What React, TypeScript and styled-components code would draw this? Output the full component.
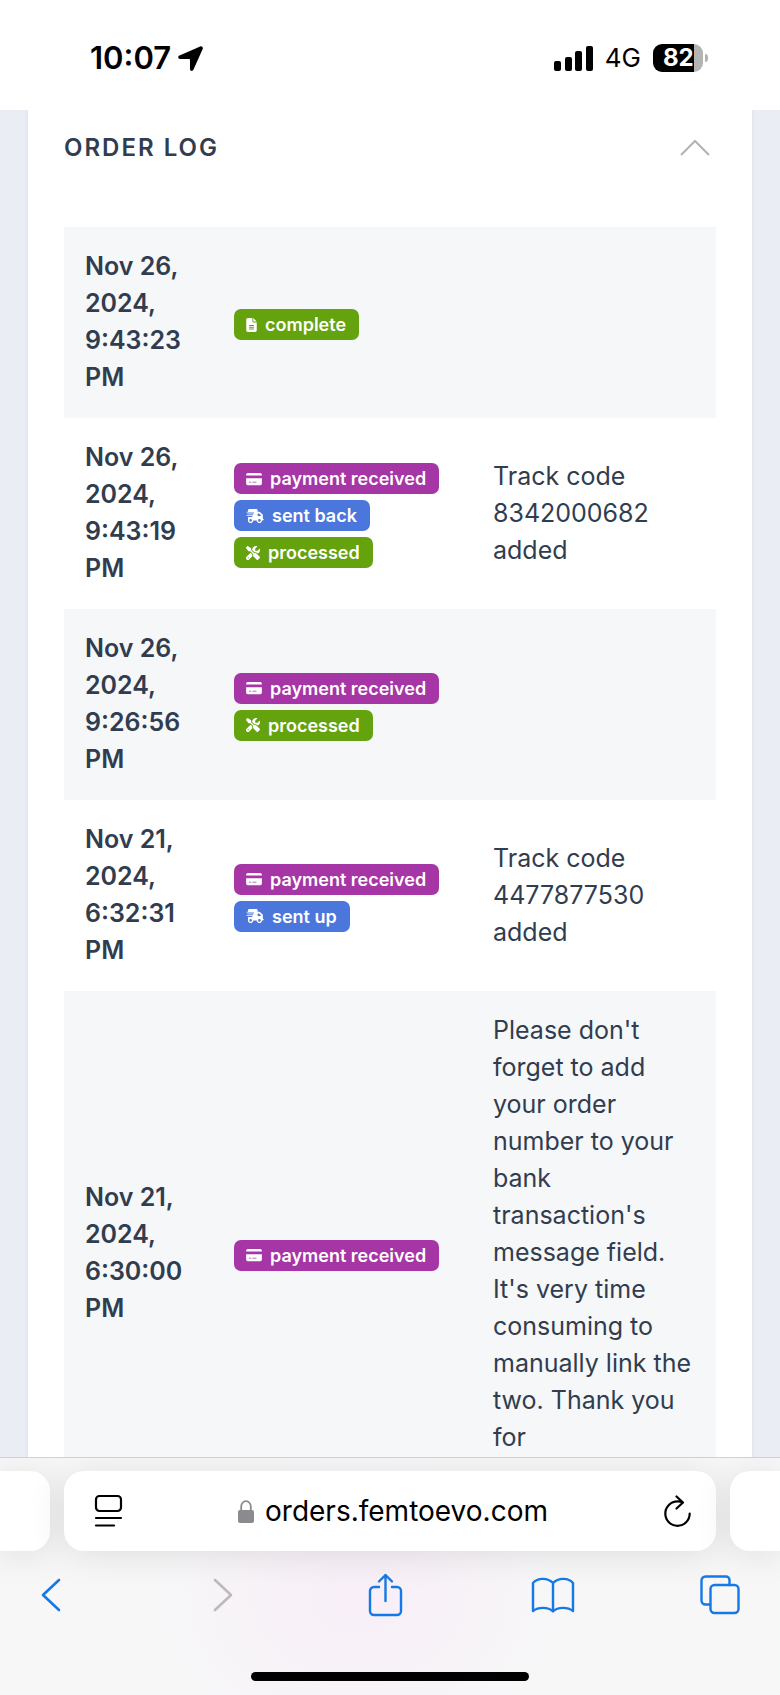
import React from 'react';
import styled, { createGlobalStyle } from 'styled-components';
import { FaFileLines, FaCreditCard, FaTruckFast, FaScrewdriverWrench } from 'react-icons/fa6';

const GlobalStyle = createGlobalStyle`
  *, *::before, *::after { box-sizing: border-box; }
  body { margin: 0; font-family: Inter, 'Liberation Sans', sans-serif; background: #fff; }
  button { border: 0; padding: 0; background: none; font: inherit; color: inherit; cursor: pointer; }
  svg { display: block; flex: none; }
`;

const Screen = styled.div`
  display: flex;
  flex-direction: column;
  height: 100vh;
  overflow: hidden;
`;

const StatusBar = styled.header`
  display: flex;
  justify-content: space-between;
  align-items: center;
  flex: none;
  height: 110px;
  padding: 6px 72px 0 90px;
  color: #000;
`;

const StatusGroup = styled.div<{ $gap: number }>`
  display: flex;
  align-items: center;
  gap: ${(p) => p.$gap}px;
`;

const Clock = styled.time`
  font-size: 31px;
  font-weight: 600;
  line-height: 36px;
`;

const Network = styled.span`
  font-size: 26px;
  line-height: 32px;
`;

const Battery = styled.div`
  display: flex;
  align-items: center;
  gap: 2px;
  &::after {
    content: '';
    width: 3px;
    height: 8px;
    border-radius: 0 4px 4px 0;
    background: #b4b4b4;
  }
`;

const BatteryLevel = styled.span`
  width: 50px;
  height: 28px;
  padding-left: 10px;
  border-radius: 9px;
  background: linear-gradient(to right, #000 82%, #b4b4b4 82%);
  color: #fff;
  font-size: 24px;
  font-weight: 700;
  line-height: 28px;
`;

const Viewport = styled.main`
  flex: 1;
  min-height: 0;
  overflow: hidden;
  padding: 0 28px;
  background: #eaedf3;
`;

const Card = styled.section`
  min-height: 100%;
  padding: 0 36px;
  background: #fff;
  box-shadow: 0 0 3px rgba(90, 110, 150, 0.15);
`;

const CardHeader = styled.div`
  display: flex;
  justify-content: space-between;
  align-items: center;
  height: 117px;
  padding: 0 6px 43px 0;
`;

const Title = styled.h2`
  margin: 0;
  color: #313d4f;
  font-size: 24px;
  font-weight: 600;
  line-height: 37px;
  letter-spacing: 2px;
`;

const LogTable = styled.table`
  width: 100%;
  border-collapse: collapse;
  table-layout: fixed;
  color: #313d4f;
  font-size: 25px;
  line-height: 37px;
`;

const LogRow = styled.tr`
  &:nth-child(odd) { background: #f5f7f9; }
`;

const DateCell = styled.th`
  width: 149px;
  padding: 21px 21px 22px;
  font-weight: 600;
  text-align: left;
`;

const StatusCell = styled.td`
  width: 259px;
  padding: 21px;
`;

const NoteCell = styled.td<{ $long?: boolean }>`
  padding: 21px 21px ${(p) => (p.$long ? 59 : 22)}px;
`;

const BadgeList = styled.ul`
  display: flex;
  flex-direction: column;
  align-items: flex-start;
  gap: 6px;
  margin: 0;
  padding: 4px 0 0;
  list-style: none;
`;

const tones = { green: '#64a30d', purple: '#a635a6', blue: '#4b77dc' };

const Badge = styled.li<{ $tone: keyof typeof tones; $iconWidth: number }>`
  display: flex;
  align-items: center;
  gap: 8px;
  height: 31px;
  padding: 0 13px 0 12px;
  border-radius: 7px;
  background: ${(p) => tones[p.$tone]};
  color: #fff;
  font-size: 18px;
  font-weight: 600;
  line-height: 31px;
  white-space: nowrap;
  svg {
    width: ${(p) => p.$iconWidth}px;
    height: 14px;
  }
`;

const BrowserBar = styled.footer`
  flex: none;
  overflow: hidden;
  border-top: 1px solid #cfd0d4;
  background:
    radial-gradient(ellipse 200px 150px at 46% 60%, #f8eef7, rgba(248, 238, 247, 0)),
    #f7f7f8;
`;

const TabStrip = styled.div`
  display: flex;
  gap: 14px;
  padding-top: 13px;
`;

const tabShadow = '0 4px 36px rgba(0, 0, 0, 0.1)';

const NextTab = styled.button<{ $side: 'left' | 'right' }>`
  width: 50px;
  height: 80px;
  border-radius: ${(p) => (p.$side === 'left' ? '0 20px 20px 0' : '20px 0 0 20px')};
  background: #fff;
  box-shadow: ${tabShadow};
`;

const AddressBar = styled.div`
  display: flex;
  flex: 1;
  justify-content: space-between;
  align-items: center;
  height: 80px;
  padding: 0 25px 0 30px;
  border-radius: 20px;
  background: #fff;
  box-shadow: ${tabShadow};
`;

const Address = styled.label`
  display: flex;
  align-items: center;
  gap: 11px;
`;

const AddressInput = styled.input`
  field-sizing: content;
  padding: 0;
  border: 0;
  outline: 0;
  background: none;
  color: #000;
  font: 400 28px/38px Inter, 'Liberation Sans', sans-serif;
`;

const Toolbar = styled.nav`
  display: flex;
  justify-content: space-between;
  align-items: center;
  height: 88px;
  padding: 0 38px 0 29px;
  color: #1478e6;
`;

const ToolButton = styled.button`
  display: flex;
  justify-content: center;
  width: 44px;
  &:disabled { color: #bcbabf; }
`;

const HomeIndicator = styled.div`
  width: 278px;
  height: 9px;
  margin: 33px auto 14px;
  border-radius: 5px;
  background: #000;
`;

type Kind = 'complete' | 'payment received' | 'sent back' | 'sent up' | 'processed';

const kinds: Record<Kind, { tone: keyof typeof tones; icon: React.ReactNode; width: number }> = {
  complete: { tone: 'green', icon: <FaFileLines />, width: 11 },
  'payment received': { tone: 'purple', icon: <FaCreditCard />, width: 16 },
  'sent back': { tone: 'blue', icon: <FaTruckFast />, width: 18 },
  'sent up': { tone: 'blue', icon: <FaTruckFast />, width: 18 },
  processed: { tone: 'green', icon: <FaScrewdriverWrench />, width: 14 },
};

const entries: { date: string; statuses: Kind[]; note?: string; long?: boolean }[] = [
  { date: 'Nov 26, 2024, 9:43:23 PM', statuses: ['complete'] },
  {
    date: 'Nov 26, 2024, 9:43:19 PM',
    statuses: ['payment received', 'sent back', 'processed'],
    note: 'Track code 8342000682 added',
  },
  { date: 'Nov 26, 2024, 9:26:56 PM', statuses: ['payment received', 'processed'] },
  {
    date: 'Nov 21, 2024, 6:32:31 PM',
    statuses: ['payment received', 'sent up'],
    note: 'Track code 4477877530 added',
  },
  {
    date: 'Nov 21, 2024, 6:30:00 PM',
    statuses: ['payment received'],
    note: "Please don't forget to add your order number to your bank transaction's message field. It's very time consuming to manually link the two. Thank you for",
    long: true,
  },
];

const stroke = {
  fill: 'none',
  stroke: 'currentColor',
  strokeLinecap: 'round' as const,
  strokeLinejoin: 'round' as const,
};

export default function App() {
  return (
    <Screen>
      <GlobalStyle />
      <StatusBar>
        <StatusGroup $gap={7}>
          <Clock>10:07</Clock>
          <svg width="25" height="25" viewBox="0 0 25 25" fill="#000">
            <path d="M22.2.4 1.5 9.6C-.5 10.5 0 13 2 13h9.2c.5 0 .8.3.8.8V23c0 2.2 2.7 2.600 3.5.6L24.7 3C25.4 1.3 23.8-.3 22.2.4Z" />
          </svg>
        </StatusGroup>
        <StatusGroup $gap={12}>
          <svg width="39" height="25" viewBox="0 0 39 25" fill="#000">
            <rect x="0" y="15" width="7" height="10" rx="2" />
            <rect x="11" y="11" width="7" height="14" rx="2" />
            <rect x="21" y="5" width="7" height="20" rx="2" />
            <rect x="32" y="0" width="7" height="25" rx="2" />
          </svg>
          <Network>4G</Network>
          <Battery>
            <BatteryLevel>82</BatteryLevel>
          </Battery>
        </StatusGroup>
      </StatusBar>

      <Viewport>
        <Card>
          <CardHeader>
            <Title>ORDER LOG</Title>
            <button aria-label="Collapse order log">
              <svg width="30" height="17" viewBox="0 0 30 17" fill="none" stroke="#b0b3b6" strokeWidth="2">
                <path d="M1 16 15 2l14 14" />
              </svg>
            </button>
          </CardHeader>
          <LogTable>
            <tbody>
              {entries.map((entry) => (
                <LogRow key={entry.date}>
                  <DateCell scope="row">{entry.date}</DateCell>
                  <StatusCell>
                    <BadgeList>
                      {entry.statuses.map((status) => (
                        <Badge key={status} $tone={kinds[status].tone} $iconWidth={kinds[status].width}>
                          {kinds[status].icon}
                          {status}
                        </Badge>
                      ))}
                    </BadgeList>
                  </StatusCell>
                  <NoteCell $long={entry.long}>{entry.note}</NoteCell>
                </LogRow>
              ))}
            </tbody>
          </LogTable>
        </Card>
      </Viewport>

      <BrowserBar>
        <TabStrip>
          <NextTab $side="left" aria-label="Previous tab" />
          <AddressBar>
            <button aria-label="Page menu">
              <svg width="29" height="34" viewBox="0 0 29 34" {...stroke} stroke="#000" strokeWidth="2.2">
                <rect x="2" y="2" width="25" height="15" rx="3.5" />
                <path d="M2 24h25M2 31.5h18" />
              </svg>
            </button>
            <Address>
              <svg width="16" height="23" viewBox="0 0 16 23">
                <rect y="10" width="16" height="13" rx="2" fill="#8a8a8f" />
                <path d="M3.2 11V6.5a4.8 5.3 0 0 1 9.6 0V11" fill="none" stroke="#8a8a8f" strokeWidth="1.8" />
              </svg>
              <AddressInput aria-label="Address" size={19} defaultValue="orders.femtoevo.com" />
            </Address>
            <button aria-label="Reload">
              <svg width="28" height="34" viewBox="0 0 28 34" {...stroke} stroke="#000" strokeWidth="2.2">
                <path d="M20 8.5C18 7.6 16.5 7.4 14.5 7.4A12.2 12.2 0 1 0 26.7 19.6M13.5 2.5 20 8.5l-6.5 6" />
              </svg>
            </button>
          </AddressBar>
          <NextTab $side="right" aria-label="Next tab" />
        </TabStrip>
        <Toolbar>
          <ToolButton aria-label="Back">
            <svg width="22" height="34" viewBox="0 0 22 34" {...stroke} strokeWidth="2.6">
              <path d="M19 2 3 17l16 15" />
            </svg>
          </ToolButton>
          <ToolButton aria-label="Forward" disabled>
            <svg width="32" height="34" viewBox="-10 0 32 34" {...stroke} strokeWidth="2.6">
              <path d="m3 2 16 15L3 32" />
            </svg>
          </ToolButton>
          <ToolButton aria-label="Share">
            <svg width="36" height="44" viewBox="0 0 36 44" {...stroke} strokeWidth="2.4">
              <path d="M11 14H6a4 4 0 0 0-4 4v20a4 4 0 0 0 4 4h23a4 4 0 0 0 4-4V18a4 4 0 0 0-4-4h-5M17.5 28V2M11 8.5 17.5 2 24 8.5" />
            </svg>
          </ToolButton>
          <ToolButton aria-label="Bookmarks">
            <svg width="44" height="36" viewBox="0 0 44 36" {...stroke} strokeWidth="2.4">
              <path d="M22 6C17 1 7 0 2 6v28c5-4 15-4.5 20 .5 5-5 15-4.5 20-.5V6C37 0 27 1 22 6ZM22 6v28" />
            </svg>
          </ToolButton>
          <ToolButton aria-label="Tabs">
            <svg width="40" height="40" viewBox="0 0 40 40" {...stroke} strokeWidth="2.4">
              <path d="M29.5 10V5a3.5 3.5 0 0 0-3.500-3.5H5.5A4 4 0 0 0 1.5 5.5v20A4 4 0 0 0 5.5 29.5H10" />
              <rect x="10.5" y="10" width="28" height="28" rx="4" />
            </svg>
          </ToolButton>
        </Toolbar>
        <HomeIndicator />
      </BrowserBar>
    </Screen>
  );
}
